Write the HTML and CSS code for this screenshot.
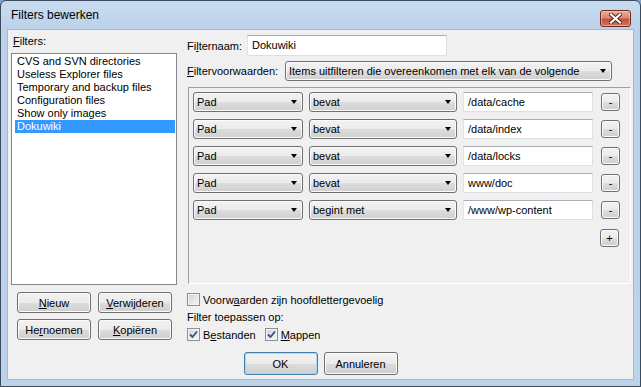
FILE: index.html
```html
<!DOCTYPE html>
<html lang="nl">
<head>
    <meta charset="UTF-8">
    <title>Filters bewerken</title>
    <link rel="stylesheet" href="styles.css">
</head>
<body>
    <div class="window">
        <div class="titlebar">
            <span class="title">Filters bewerken</span>
            <span class="close">
                <svg width="13" height="11" viewBox="0 0 13 11">
                    <path d="M2 1.5 L11 9.5 M11 1.5 L2 9.5" stroke="#5a1f17" stroke-width="4" stroke-linecap="square"/>
                    <path d="M2 1.5 L11 9.5 M11 1.5 L2 9.5" stroke="#ffffff" stroke-width="2.2" stroke-linecap="square"/>
                </svg>
            </span>
        </div>

        <div class="client">
            <div class="main">
                <div class="left">
                    <div class="label"><u>F</u>ilters:</div>
                    <div class="listbox">
                        <div class="item">CVS and SVN directories</div>
                        <div class="item">Useless Explorer files</div>
                        <div class="item">Temporary and backup files</div>
                        <div class="item">Configuration files</div>
                        <div class="item">Show only images</div>
                        <div class="item selected">Dokuwiki</div>
                    </div>
                    <div class="list-buttons">
                        <div class="btn"><span><u>N</u>ieuw</span></div>
                        <div class="btn"><span><u>V</u>erwijderen</span></div>
                        <div class="btn"><span>He<u>r</u>noemen</span></div>
                        <div class="btn"><span><u>K</u>opiëren</span></div>
                    </div>
                </div>

                <div class="right">
                    <div class="field-row">
                        <span class="field-label name-label">Fi<u>l</u>ternaam:</span>
                        <div class="textbox name-box">Dokuwiki</div>
                    </div>
                    <div class="field-row combo-row">
                        <span class="field-label cond-label"><u>F</u>iltervoorwaarden:</span>
                        <div class="combo cond-box">
                            <span>Items uitfilteren die overeenkomen met elk van de volgende</span>
                            <span class="arrow"></span>
                        </div>
                    </div>

                    <div class="conditions">
                        <div class="cond">
                            <div class="combo type"><span>Pad</span><span class="arrow"></span></div>
                            <div class="combo op"><span>bevat</span><span class="arrow"></span></div>
                            <div class="textbox value">/data/cache</div>
                            <div class="btn small"><span>-</span></div>
                        </div>
                        <div class="cond">
                            <div class="combo type"><span>Pad</span><span class="arrow"></span></div>
                            <div class="combo op"><span>bevat</span><span class="arrow"></span></div>
                            <div class="textbox value">/data/index</div>
                            <div class="btn small"><span>-</span></div>
                        </div>
                        <div class="cond">
                            <div class="combo type"><span>Pad</span><span class="arrow"></span></div>
                            <div class="combo op"><span>bevat</span><span class="arrow"></span></div>
                            <div class="textbox value">/data/locks</div>
                            <div class="btn small"><span>-</span></div>
                        </div>
                        <div class="cond">
                            <div class="combo type"><span>Pad</span><span class="arrow"></span></div>
                            <div class="combo op"><span>bevat</span><span class="arrow"></span></div>
                            <div class="textbox value">www/doc</div>
                            <div class="btn small"><span>-</span></div>
                        </div>
                        <div class="cond">
                            <div class="combo type"><span>Pad</span><span class="arrow"></span></div>
                            <div class="combo op"><span>begint met</span><span class="arrow"></span></div>
                            <div class="textbox value">/www/wp-content</div>
                            <div class="btn small"><span>-</span></div>
                        </div>
                        <div class="add-row">
                            <div class="btn small"><span>+</span></div>
                        </div>
                    </div>

                    <div class="check-row case-row">
                        <span class="checkbox"></span>
                        <span>Voorw<u>a</u>arden zijn hoofdlettergevoelig</span>
                    </div>
                    <div class="apply-label">Filter toepassen op:</div>
                    <div class="check-row apply-row">
                        <span class="checkbox checked">
                            <svg width="9" height="9" viewBox="0 0 9 9"><path d="M1 4.5 L3.5 7 L8 1.5" fill="none" stroke="#31508f" stroke-width="1.8"/></svg>
                        </span>
                        <span>B<u>e</u>standen</span>
                        <span class="checkbox checked second">
                            <svg width="9" height="9" viewBox="0 0 9 9"><path d="M1 4.5 L3.5 7 L8 1.5" fill="none" stroke="#31508f" stroke-width="1.8"/></svg>
                        </span>
                        <span><u>M</u>appen</span>
                    </div>
                </div>
            </div>

            <div class="footer">
                <div class="btn wide default"><span>OK</span></div>
                <div class="btn wide"><span>Annuleren</span></div>
            </div>
        </div>
    </div>
</body>
</html>
```

FILE: styles.css
```css
* {
    box-sizing: border-box;
}

body {
    margin: 0;
    width: 641px;
    height: 387px;
    overflow: hidden;
    font-family: "Liberation Sans", Arial, sans-serif;
    font-size: 11px;
    color: #000;
    background: #7fa4c8;
}

u {
    text-decoration: underline;
    text-underline-offset: 1px;
}

.window {
    width: 641px;
    height: 387px;
    border: 1px solid #3b4a5c;
    border-radius: 6px 6px 0 0;
    background: linear-gradient(#c8dbf0, #bcd2ea 29px, #bcd3ec);
    padding: 0 7px 7px;
    display: flex;
    flex-direction: column;
}

.titlebar {
    height: 29px;
    display: flex;
    justify-content: space-between;
    align-items: center;
    padding-left: 3px;
}

.title {
    font-size: 12px;
    margin-top: -1px;
}

.close {
    align-self: flex-start;
    margin-top: 9px;
    margin-right: 2px;
    width: 31px;
    height: 17px;
    border: 1px solid #6b2a20;
    border-radius: 3px;
    background: linear-gradient(#eaa999 0%, #d98a78 45%, #c4503c 55%, #d07560 100%);
    box-shadow: inset 0 0 0 1px rgba(255, 220, 210, 0.5);
    display: flex;
    align-items: center;
    justify-content: center;
}

.client {
    flex: 1;
    background: #f0f0f0;
    box-shadow: 0 0 0 1px #a3b8d1;
    display: flex;
    flex-direction: column;
}

.main {
    display: flex;
    align-items: flex-start;
}

/* left column */

.left {
    margin-left: 3px;
    width: 166px;
    padding-top: 5px;
}

.label {
    height: 13px;
    line-height: 13px;
    padding-left: 2px;
}

.listbox {
    margin-top: 5px;
    height: 232px;
    border: 1px solid #828790;
    background: #fff;
    padding: 1px 1px 1px 3px;
}

.item {
    height: 13px;
    line-height: 13px;
    padding-left: 2px;
    white-space: nowrap;
}

.item.selected {
    background: #3399ff;
    color: #fff;
}

.list-buttons {
    margin-top: 7px;
    margin-left: 6px;
    display: grid;
    grid-template-columns: 74px 74px;
    column-gap: 7px;
    row-gap: 6px;
}

.list-buttons .btn {
    height: 21px;
}

/* buttons and boxes */

.btn {
    display: flex;
    align-items: center;
    justify-content: center;
    border: 1px solid #707070;
    border-radius: 3px;
    background: linear-gradient(#f2f2f2 0%, #ebebeb 50%, #dddddd 50%, #cfcfcf 100%);
    box-shadow: inset 0 0 0 1px #fbfbfb;
    white-space: nowrap;
}

.btn.small {
    width: 19px;
    height: 18px;
    font-size: 11px;
}

.btn.wide {
    width: 74px;
    height: 23px;
}

.btn.default {
    border-color: #3c7fb1;
    box-shadow: inset 0 0 0 1px #a6dcf7;
}

.combo {
    display: flex;
    align-items: center;
    justify-content: space-between;
    height: 20px;
    padding: 0 5px 0 3px;
    border: 1px solid #707070;
    border-radius: 3px;
    background: linear-gradient(#f2f2f2 0%, #ebebeb 50%, #dddddd 50%, #cfcfcf 100%);
    box-shadow: inset 0 0 0 1px #fbfbfb;
    white-space: nowrap;
}

.arrow {
    width: 0;
    height: 0;
    border-left: 3.5px solid transparent;
    border-right: 3.5px solid transparent;
    border-top: 4px solid #000;
}

.textbox {
    height: 21px;
    line-height: 19px;
    padding-left: 4px;
    border: 1px solid #dbdfe6;
    border-top-color: #abadb3;
    border-left-color: #e2e3ea;
    background: #fff;
    white-space: nowrap;
}

/* right column */

.right {
    margin-left: 10px;
    width: 445px;
    padding-top: 5px;
}

.field-row {
    display: flex;
    align-items: center;
}

.field-label {
    flex: none;
}

.name-label {
    width: 60px;
}

.name-box {
    width: 200px;
}

.combo-row {
    margin-top: 5px;
}

.cond-label {
    width: 98px;
}

.cond-box {
    width: 327px;
}

.conditions {
    margin-top: 6px;
    margin-left: 1px;
    width: 443px;
    height: 197px;
    border: 1px solid;
    border-color: #a0a0a0 #ffffff #ffffff #a0a0a0;
    padding: 4px 0 0 4px;
    display: flex;
    flex-direction: column;
    gap: 7px;
}

.cond {
    display: flex;
    align-items: center;
    height: 20px;
}

.cond .type {
    width: 110px;
}

.cond .op {
    width: 148px;
    margin-left: 6px;
}

.cond .value {
    width: 130px;
    height: 20px;
    line-height: 18px;
    margin-left: 6px;
}

.cond .btn {
    margin-left: 8px;
}

.add-row {
    margin-top: 2px;
    padding-left: 407px;
}

.check-row {
    display: flex;
    align-items: center;
    height: 13px;
}

.case-row {
    margin-top: 9px;
}

.checkbox {
    width: 13px;
    height: 13px;
    margin-right: 3px;
    border: 1px solid #8e8f8f;
    background: linear-gradient(135deg, #cfd3d8, #f7f7f7);
    box-shadow: inset 0 0 0 1px #f4f4f4;
    display: flex;
    align-items: center;
    justify-content: center;
}

.checkbox.second {
    margin-left: 9px;
}

.apply-label {
    margin-top: 5px;
    height: 13px;
    line-height: 13px;
}

.apply-row {
    margin-top: 4px;
}

/* dialog buttons */

.footer {
    margin-top: 11px;
    display: flex;
    justify-content: center;
    gap: 6px;
}
```
